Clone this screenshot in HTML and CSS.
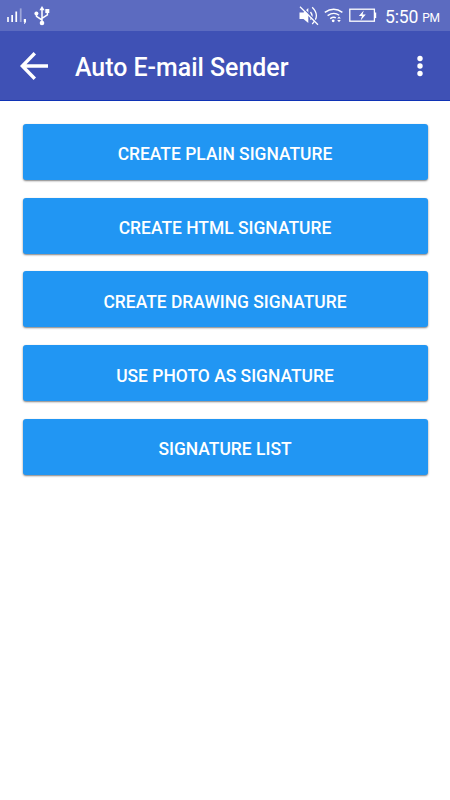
FILE: index.html
```html
<!DOCTYPE html>
<html lang="en">
<head>
    <meta charset="UTF-8">
    <meta name="viewport" content="width=device-width, initial-scale=1.0">
    <title>Auto E-mail Sender</title>
    <link rel="stylesheet" href="styles.css">
</head>
<body>
    <div class="status-bar">
        <svg class="signal" width="20" height="18" viewBox="0 0 20 18" fill="#fff">
            <rect x="0.2" y="10" width="1.6" height="5"/>
            <rect x="4.3" y="8" width="1.7" height="7"/>
            <rect x="8.4" y="4.5" width="1.7" height="10.5"/>
            <rect x="12.8" y="1.4" width="1.8" height="13.6" opacity="0.4"/>
            <path d="M16.8 12h2.2v3l-1.2 1.7h-0.9l0.5-1.7h-0.6z"/>
        </svg>
        <svg class="usb" width="16" height="20" viewBox="0 0 16 20" fill="#fff">
            <path d="M8 3v14M2.5 8v2.4l5.5 3.6M13.4 5v3.8L8 12.4" fill="none" stroke="#fff" stroke-width="1.5"/>
            <path d="M8 0l2.6 4.2h-5.2z"/>
            <circle cx="2.4" cy="7.6" r="2"/>
            <rect x="11.3" y="3" width="4" height="4"/>
            <circle cx="8" cy="17" r="2.3"/>
        </svg>
        <div class="status-right">
            <svg width="20" height="20" viewBox="0 0 20 20">
                <path d="M0.5 6.5h4l4.8-4.4v15L4.5 13H0.5z" fill="#fff"/>
                <path d="M11.5 6q3 3.8 0 7.6M13.2 1.2q8.4 8.4 0 16.8" fill="none" stroke="#fff" stroke-width="1.3"/>
                <path d="M2.4 0.3l17 17.5" stroke="#5c6bc0" stroke-width="1.4"/>
                <path d="M1 0.8l18 18" stroke="#fff" stroke-width="1.3"/>
            </svg>
            <svg class="wifi" width="20" height="16" viewBox="0 0 20 16" fill="none" stroke="#fff" stroke-width="1.4">
                <path d="M0.8 4.4q9-6.4 17.6 0M3.6 7.6q6.2-4.2 11.6-0.4M6.2 10.6q3.3-2.2 5.6-0.8"/>
                <circle cx="9.2" cy="12.8" r="1.4" fill="#fff" stroke="none"/>
                <path d="M13.2 10.6l1.8-2.2 1.8 2.2zM13.2 12l1.8 2.2 1.8-2.2z" fill="#fff" stroke="none"/>
            </svg>
            <svg class="battery" width="28" height="15" viewBox="0 0 28 15">
                <rect x="0.8" y="1.2" width="24.6" height="12" fill="none" stroke="#fff" stroke-width="1.3"/>
                <path d="M25.8 4.5h1.4v5.6h-1.4" fill="#fff"/>
                <path d="M14.8 2.4L9.8 7.9h3.2L11.6 12.4l5.2-5.8h-3.3z" fill="#fff"/>
            </svg>
            <span class="time">5:50</span>
            <span class="period">PM</span>
        </div>
    </div>

    <header class="app-bar">
        <svg class="back" width="28" height="28" viewBox="0 0 28 28" fill="none" stroke="#fff" stroke-width="3.4">
            <path d="M14.8 1.2L2.3 14l12.5 12.8M2.3 14H28"/>
        </svg>
        <h1 class="title">Auto E-mail Sender</h1>
        <svg class="more" width="6" height="22" viewBox="0 0 6 22" fill="#fff">
            <circle cx="3" cy="3.5" r="2.7"/>
            <circle cx="3" cy="11" r="2.7"/>
            <circle cx="3" cy="18.5" r="2.7"/>
        </svg>
    </header>

    <main class="menu">
        <button class="menu-btn">CREATE PLAIN SIGNATURE</button>
        <button class="menu-btn">CREATE HTML SIGNATURE</button>
        <button class="menu-btn">CREATE DRAWING SIGNATURE</button>
        <button class="menu-btn">USE PHOTO AS SIGNATURE</button>
        <button class="menu-btn">SIGNATURE LIST</button>
    </main>
</body>
</html>
```
FILE: styles.css
```css
* {
    margin: 0;
    padding: 0;
    box-sizing: border-box;
}

body {
    min-height: 100vh;
    background: #fff;
    font-family: Roboto, "Liberation Sans", sans-serif;
}

.status-bar {
    display: flex;
    align-items: flex-start;
    height: 31px;
    padding: 7px 10px 0 7px;
    background: #5c6bc0;
    color: #fff;
}

.usb {
    margin: -1px 0 0 7px;
}

.status-right {
    display: flex;
    align-items: flex-start;
    width: 141px;
    margin: -1px 0 0 auto;
}

.wifi {
    margin: 2px 0 0 5px;
}

.battery {
    margin: 2px 0 0 5px;
}

.time {
    margin-left: 8px;
    font-size: 17.6px;
    line-height: 22px;
    letter-spacing: -0.2px;
}

.period {
    margin-left: 4px;
    font-size: 12px;
    line-height: 24px;
    letter-spacing: -0.2px;
}

.app-bar {
    display: flex;
    align-items: center;
    height: 70px;
    padding: 0 27px 0 20px;
    background: #3f51b5;
    border-bottom: 1px solid #1033b5;
}

.title {
    margin: 4px auto 0 27px;
    color: #fff;
    font-size: 24.9px;
    font-weight: 500;
    line-height: 30px;
}

.menu {
    display: flex;
    flex-direction: column;
    gap: 17.8px;
    padding: 22.8px 22.5px;
}

.menu-btn {
    height: 56px;
    padding-top: 5px;
    border: none;
    border-radius: 3px;
    background: #2196f3;
    box-shadow: 0 1px 2px rgba(0, 0, 0, 0.5);
    color: #fff;
    font-family: inherit;
    font-size: 17.45px;
    font-weight: 500;
    cursor: pointer;
}
```
